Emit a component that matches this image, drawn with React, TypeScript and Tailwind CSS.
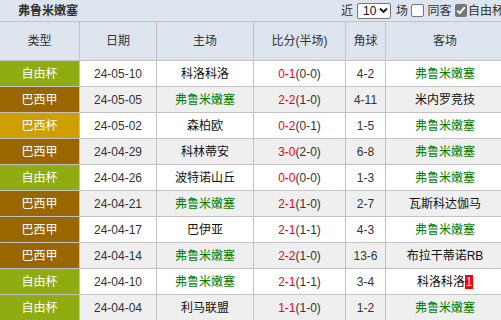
import React from "react";

type Row = {
  type: string;
  date: string;
  home: string;
  homeGreen?: boolean;
  score: string;
  half: string;
  corner: string;
  away: string;
  awayGreen?: boolean;
  badge?: string;
};

const rows: Row[] = [
  { type: "自由杯", date: "24-05-10", home: "科洛科洛", score: "0-1", half: "(0-0)", corner: "4-2", away: "弗鲁米嫩塞", awayGreen: true },
  { type: "巴西甲", date: "24-05-05", home: "弗鲁米嫩塞", homeGreen: true, score: "2-2", half: "(1-0)", corner: "4-11", away: "米内罗竞技" },
  { type: "巴西杯", date: "24-05-02", home: "森柏欧", score: "0-2", half: "(0-1)", corner: "1-5", away: "弗鲁米嫩塞", awayGreen: true },
  { type: "巴西甲", date: "24-04-29", home: "科林蒂安", score: "3-0", half: "(2-0)", corner: "6-8", away: "弗鲁米嫩塞", awayGreen: true },
  { type: "自由杯", date: "24-04-26", home: "波特诺山丘", score: "0-0", half: "(0-0)", corner: "1-3", away: "弗鲁米嫩塞", awayGreen: true },
  { type: "巴西甲", date: "24-04-21", home: "弗鲁米嫩塞", homeGreen: true, score: "2-1", half: "(1-0)", corner: "2-7", away: "瓦斯科达伽马" },
  { type: "巴西甲", date: "24-04-17", home: "巴伊亚", score: "2-1", half: "(1-1)", corner: "4-3", away: "弗鲁米嫩塞", awayGreen: true },
  { type: "巴西甲", date: "24-04-14", home: "弗鲁米嫩塞", homeGreen: true, score: "2-2", half: "(1-0)", corner: "13-6", away: "布拉干蒂诺RB" },
  { type: "自由杯", date: "24-04-10", home: "弗鲁米嫩塞", homeGreen: true, score: "2-1", half: "(1-1)", corner: "3-4", away: "科洛科洛", badge: "1" },
  { type: "自由杯", date: "24-04-04", home: "利马联盟", score: "1-1", half: "(1-0)", corner: "1-2", away: "弗鲁米嫩塞", awayGreen: true },
];

function typeBg(t: string) {
  if (t === "自由杯") return "bg-[#8fad12]";
  if (t === "巴西杯") return "bg-[#cf9e00]";
  return "bg-[#996600]";
}

const font = { fontFamily: '"Liberation Sans", Arial, "Noto Sans CJK SC", sans-serif' };

export default function App() {
  return (
    <div className="w-[501px] h-[320px] overflow-hidden bg-white text-[12px] text-[#333]" style={font}>
      <div className="w-[504px]">
        {/* Title bar */}
        <div className="h-[22px] flex items-center justify-between bg-[#dde4ed] border-b border-[#c2c2c2] whitespace-nowrap">
          <div className="pl-[18px] font-bold text-[12px] text-[#333]">弗鲁米嫩塞</div>
          <div className="flex items-center pr-0 w-[163px] shrink-0 overflow-hidden">
            <span className="ml-0">近</span>
            <div className="ml-[4px] w-[35px] h-[16px] border border-[#767676] rounded-[2px] bg-white flex items-center justify-between pl-[5px] pr-[2px] text-[12px] text-[#111]">
              <span>10</span>
              <svg width="9" height="7" viewBox="0 0 9 7">
                <path d="M1 1.5 L4.5 5 L8 1.5" stroke="#111" strokeWidth="1.8" fill="none" />
              </svg>
            </div>
            <span className="ml-[5px]">场</span>
            <div className="ml-[3px] w-[13px] h-[13px] border border-[#767676] rounded-[2px] bg-white" />
            <span className="ml-[4px]">同客</span>
            <div className="ml-[3px] w-[13px] h-[13px] rounded-[2px] bg-[#767676] flex items-center justify-center">
              <svg width="10" height="9" viewBox="0 0 10 9">
                <path d="M1.2 4.6 L3.8 7.2 L8.8 1.2" stroke="#fff" strokeWidth="1.9" fill="none" />
              </svg>
            </div>
            <span className="ml-[1px]">自由杯</span>
          </div>
        </div>

        {/* Header row */}
        <div className="flex h-[39px] bg-[#dde4ed] border-b border-[#c2c2c2] text-[#333]">
          <div className="w-[80px] border-r border-[#c2c2c2] flex items-center justify-center">类型</div>
          <div className="w-[77px] border-r border-[#c2c2c2] flex items-center justify-center">日期</div>
          <div className="w-[97px] border-r border-[#c2c2c2] flex items-center justify-center">主场</div>
          <div className="w-[92px] border-r border-[#c2c2c2] flex items-center justify-center">比分(半场)</div>
          <div className="w-[40px] border-r border-[#c2c2c2] flex items-center justify-center">角球</div>
          <div className="w-[118px] flex items-center justify-center">客场</div>
        </div>

        {rows.map((r, i) => (
          <div
            key={i}
            className={`flex h-[26px] border-b border-[#c2c2c2] whitespace-nowrap ${i % 2 === 1 ? "bg-[#efefef]" : "bg-white"}`}
          >
            <div className={`w-[80px] border-r border-[#c2c2c2] flex items-center justify-center text-white ${typeBg(r.type)}`}>
              {r.type}
            </div>
            <div className="w-[77px] border-r border-[#c2c2c2] flex items-center justify-center text-[#333]">{r.date}</div>
            <div className={`w-[97px] border-r border-[#c2c2c2] flex items-center justify-center ${r.homeGreen ? "text-[#008000]" : "text-[#111]"}`}>
              {r.home}
            </div>
            <div className="w-[92px] border-r border-[#c2c2c2] flex items-center justify-center">
              <span className="text-[#ff0000]">{r.score}</span>
              <span className="text-[#333]">{r.half}</span>
            </div>
            <div className="w-[40px] border-r border-[#c2c2c2] flex items-center justify-center text-[#333]">{r.corner}</div>
            <div className={`w-[118px] flex items-center justify-center ${r.awayGreen ? "text-[#008000]" : "text-[#111]"}`}>
              <span>{r.away}</span>
              {r.badge && (
                <span className="bg-[#ff0000] text-white h-[14px] w-[8px] flex items-center justify-center leading-none text-[12px]">
                  {r.badge}
                </span>
              )}
            </div>
          </div>
        ))}
      </div>
    </div>
  );
}
